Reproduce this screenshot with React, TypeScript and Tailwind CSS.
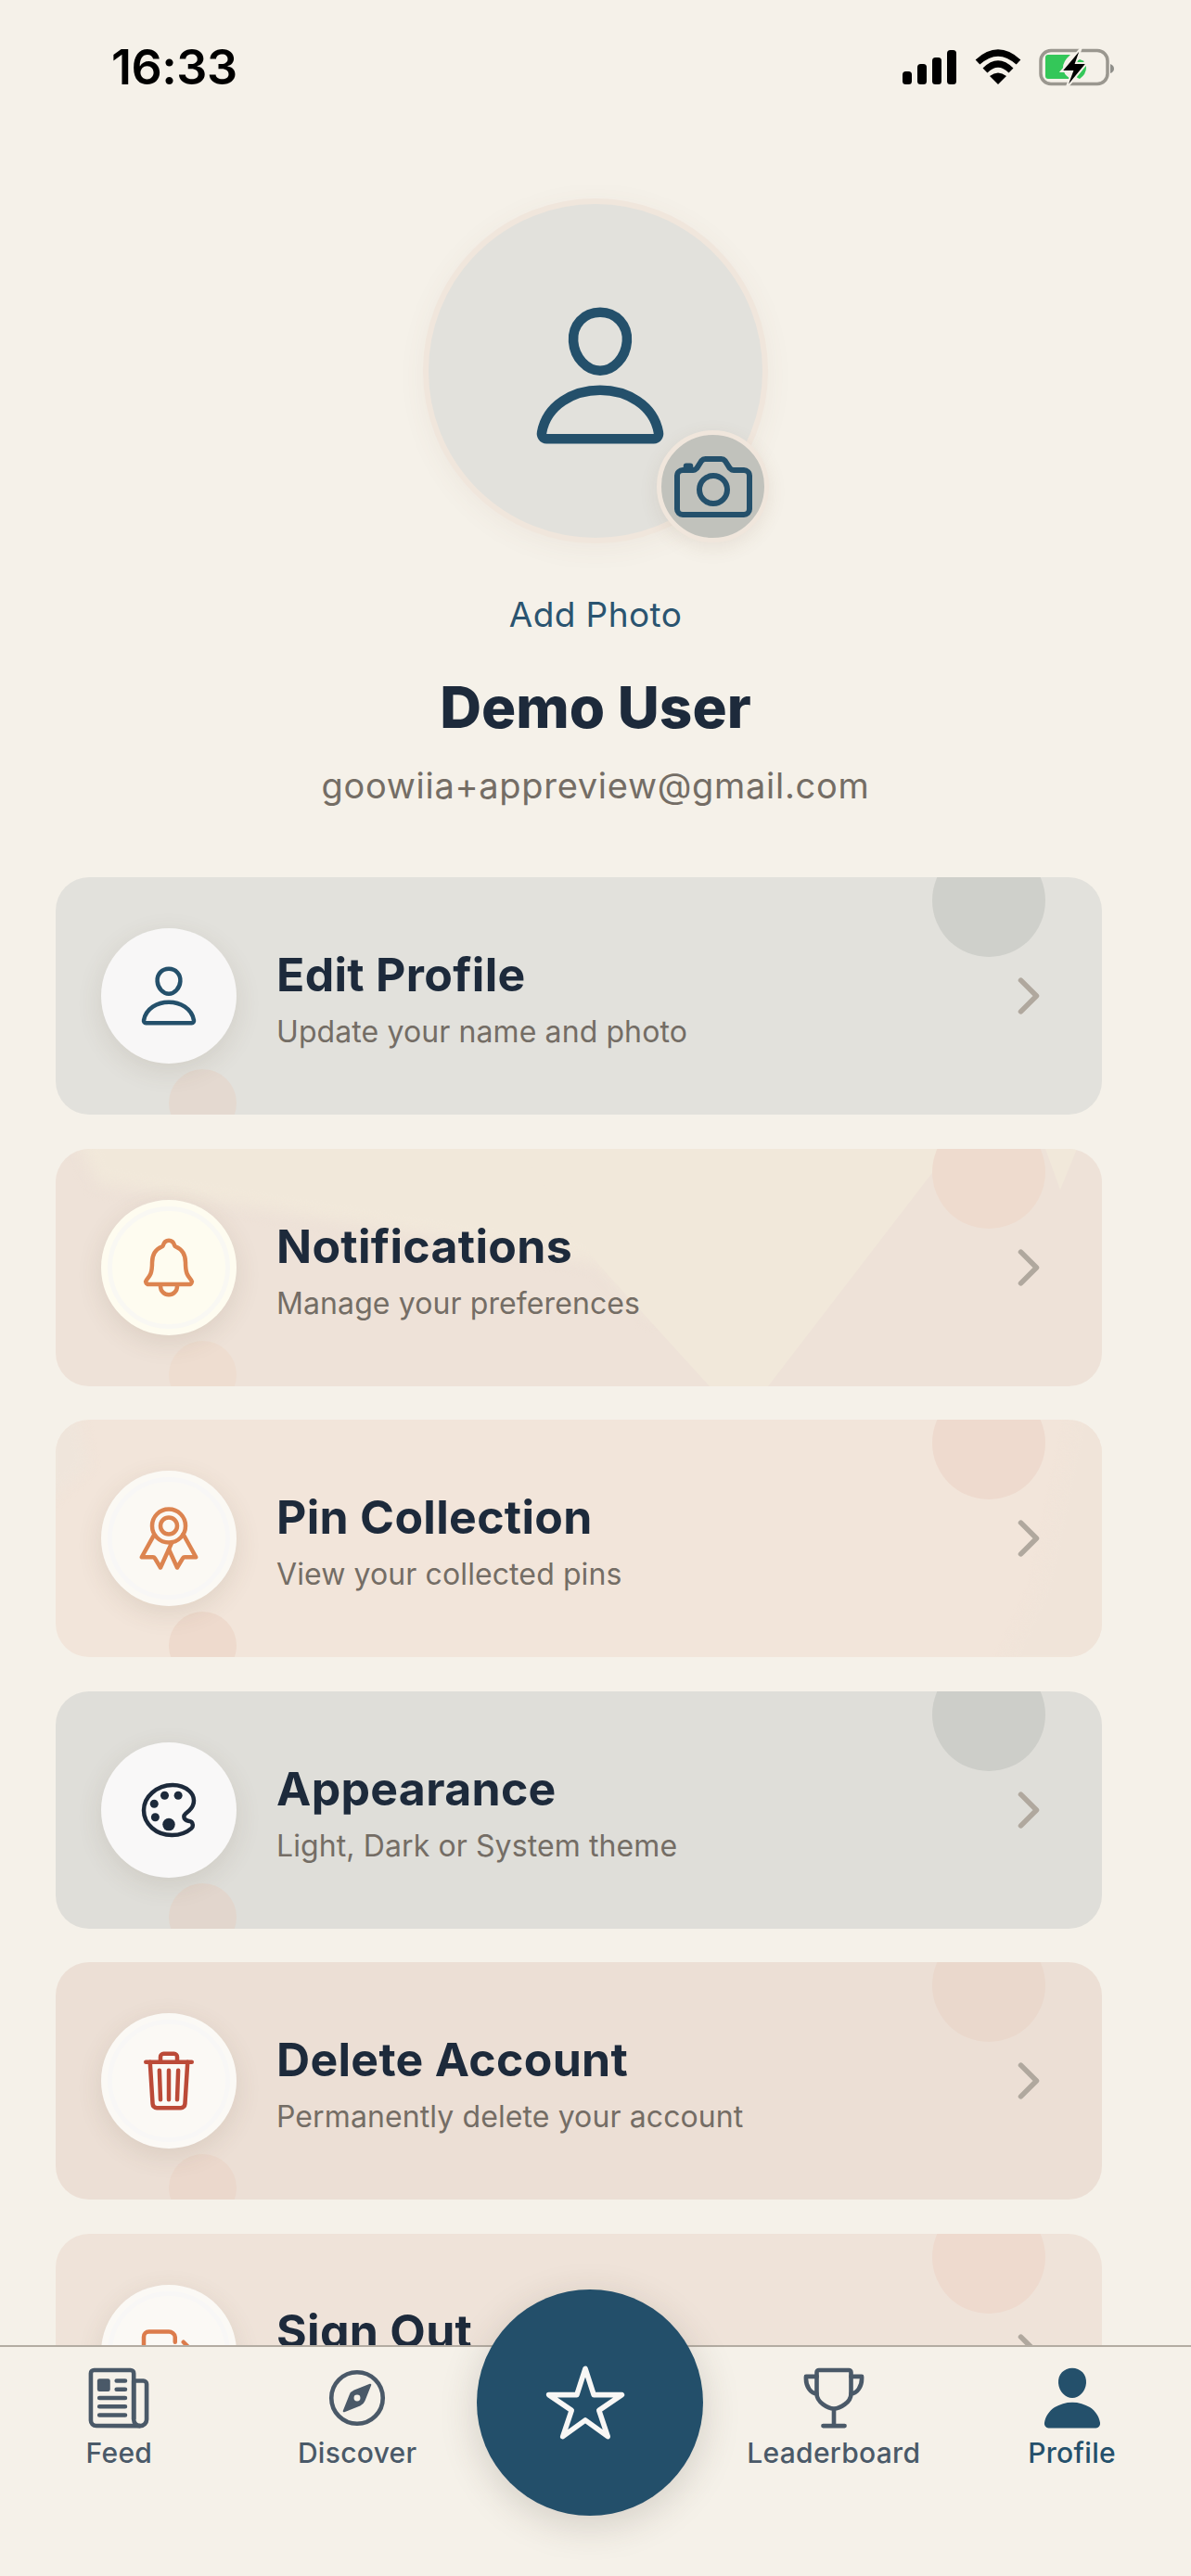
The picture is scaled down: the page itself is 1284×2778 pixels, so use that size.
import {
  IoCameraOutline,
  IoChevronForward,
  IoColorPaletteOutline,
  IoCompassOutline,
  IoLogOutOutline,
  IoNewspaperOutline,
  IoNotificationsOutline,
  IoPerson,
  IoPersonOutline,
  IoRibbonOutline,
  IoStarOutline,
  IoTrashOutline,
  IoTrophyOutline,
} from "react-icons/io5";
import type { IconType } from "react-icons";

type Row = {
  title: string;
  sub: string;
  Icon: IconType;
  iconColor: string;
  card: string;
  corner: string;
  foot: string;
  disc: string;
  ring?: string;
  shape?: "vee" | "band";
};

const rows: Row[] = [
  {
    title: "Edit Profile",
    sub: "Update your name and photo",
    Icon: IoPersonOutline,
    iconColor: "text-[#24506b]",
    card: "bg-[#e2e1dc]",
    corner: "bg-[#cfd0cb]",
    foot: "bg-[#e4d9d0]",
    disc: "bg-[#f8f7f7]",
  },
  {
    title: "Notifications",
    sub: "Manage your preferences",
    Icon: IoNotificationsOutline,
    iconColor: "text-[#dc8450]",
    card: "bg-[#eee2d8]",
    corner: "bg-[#eedbce]",
    foot: "bg-[#eeddd0]",
    disc: "bg-[#fefcf0]",
    ring: "border-[#f9f8f3]",
    shape: "vee",
  },
  {
    title: "Pin Collection",
    sub: "View your collected pins",
    Icon: IoRibbonOutline,
    iconColor: "text-[#dc8450]",
    card: "bg-[#f2e5da]",
    corner: "bg-[#eedace]",
    foot: "bg-[#eedacd]",
    disc: "bg-[#fbf9f4]",
    ring: "border-[#f8f7f6]",
    shape: "band",
  },
  {
    title: "Appearance",
    sub: "Light, Dark or System theme",
    Icon: IoColorPaletteOutline,
    iconColor: "text-[#1d2a3b]",
    card: "bg-[#dfded9]",
    corner: "bg-[#cdcec9]",
    foot: "bg-[#e2d6cd]",
    disc: "bg-[#f9f8f8]",
  },
  {
    title: "Delete Account",
    sub: "Permanently delete your account",
    Icon: IoTrashOutline,
    iconColor: "text-[#bb4a38]",
    card: "bg-[#ecdfd5]",
    corner: "bg-[#ead8cc]",
    foot: "bg-[#ebd8cc]",
    disc: "bg-[#fbf9f5]",
    ring: "border-[#f8f7f6]",
  },
  {
    title: "Sign Out",
    sub: "Sign out of your account",
    Icon: IoLogOutOutline,
    iconColor: "text-[#dc7c4c]",
    card: "bg-[#efe3d9]",
    corner: "bg-[#eedace]",
    foot: "bg-[#eedacd]",
    disc: "bg-[#fbf9f5]",
    ring: "border-[#f8f7f6]",
  },
];

const tabs: { label: string; Icon: IconType; active?: boolean }[] = [
  { label: "Feed", Icon: IoNewspaperOutline },
  { label: "Discover", Icon: IoCompassOutline },
  { label: "", Icon: IoStarOutline },
  { label: "Leaderboard", Icon: IoTrophyOutline },
  { label: "Profile", Icon: IoPerson, active: true },
];

// drawn by hand, none of the icon sets has the ios status glyphs
const StatusIcons = () => (
  <svg width="232" height="44" viewBox="0 0 232 44" fill="none">
    <rect x="1" y="25" width="10" height="14" rx="3.5" fill="#000" />
    <rect x="17" y="17" width="10" height="22" rx="3.5" fill="#000" />
    <rect x="33" y="10" width="10" height="29" rx="3.5" fill="#000" />
    <rect x="49" y="2" width="10" height="37" rx="3.5" fill="#000" />
    <path d="M82 15Q104-5 126 15" stroke="#000" strokeWidth="7" />
    <path d="M90 24Q104 10 118 24" stroke="#000" strokeWidth="7" />
    <path d="M104 39L95 30Q104 23 113 30Z" fill="#000" />
    <rect x="150" y="2.5" width="72" height="36" rx="11" stroke="#9a978f" strokeWidth="3.5" />
    <path d="M225 17v10q4-1.5 4-5t-4-5Z" fill="#8f8f8a" />
    <path d="M158 7h24q-8 7-8 14t8 12h-24q-3 0-3-3V10q0-3 3-3Z" fill="#34c759" />
    <path d="M192 12q7 2 7 9t-7 12q-6-2-6-10t6-11Z" fill="#34c759" />
    <path d="M194 -1 172 25h12l-7 19 23-28h-12l6-17Z" fill="#000" stroke="#f5f1e9" strokeWidth="2" />
  </svg>
);

const CardShape = ({ shape }: { shape: "vee" | "band" }) => (
  <svg className="absolute inset-0" width="1128" height="256" viewBox="0 0 1128 256">
    {shape === "vee" ? (
      <>
        <path className="blur-[8px]" d="M18-20L45 37 188 59 584 123 640 180 800 180 900-20Z" fill="#f1e8da" />
        <path d="M584 123L705 256H768L944 27 968 0H500Z" fill="#f1e8da" />
        <path d="M1067 0L1083 44 1101 0Z" fill="#f1e8da" />
      </>
    ) : (
      <>
        <path className="blur-[6px]" d="M1100-10L1140-10V266H1020L1060 180Z" fill="#f0e4d9" />
        <path className="blur-[6px]" d="M-10-10H22L36 50-10 90Z" fill="#efe5db" />
      </>
    )}
  </svg>
);

const ProfileRow = ({ row }: { row: Row }) => {
  const { Icon } = row;
  return (
    <div
      className={`relative flex items-center h-[256px] shrink-0 rounded-[36px] overflow-hidden px-[49px] ${row.card}`}
    >
      {row.shape && <CardShape shape={row.shape} />}
      <div className={`absolute -top-[36px] right-[61px] w-[122px] h-[122px] rounded-full ${row.corner}`} />
      <div className={`absolute -bottom-[24px] left-[122px] w-[73px] h-[73px] rounded-full ${row.foot}`} />
      <div
        className={`relative flex items-center justify-center shrink-0 w-[146px] h-[146px] rounded-full shadow-[0_8px_28px_rgba(90,70,50,0.12)] ${row.disc}`}
      >
        {row.ring && <div className={`absolute inset-[7px] rounded-full border-[5px] ${row.ring}`} />}
        <Icon size={72} className={`relative ${row.iconColor}`} />
      </div>
      <div className="relative flex-1 ml-[43px] pt-[6px]">
        <div className="text-[50px] leading-[60px] [font-weight:650] text-[#1d2a3b] tracking-[0.3px]">{row.title}</div>
        <div className="text-[32px] leading-[40px] mt-[12px] text-[#746d65] tracking-[0.1px]">{row.sub}</div>
      </div>
      <IoChevronForward size={60} className="relative shrink-0 text-[#b0a89e]" />
    </div>
  );
};

const App = () => {
  return (
    <div className="flex flex-col w-[1284px] h-[2778px] overflow-hidden bg-[#f5f1e9] [font-family:Inter,sans-serif]">
      <div className="flex-1 min-h-0 overflow-hidden">
        <div className="flex justify-between items-start h-[120px] pt-[52px] pl-[120px] pr-[80px]">
          <div className="text-[52px] leading-[42px] font-semibold text-black tracking-[-0.5px]">16:33</div>
          <StatusIcons />
        </div>

        <div className="flex flex-col items-center mt-[94px]">
          <div className="relative w-[372px] h-[372px]">
            <div className="flex items-center justify-center w-full h-full pl-[10px] pt-[10px] rounded-full bg-[#e2e1dc] border-[6px] border-[#f0e6dc] shadow-[0_6px_30px_rgba(120,90,60,0.06)]">
              <IoPersonOutline size={168} className="text-[#24506b]" />
            </div>
            <div className="absolute -right-[1px] bottom-[1px] flex items-center justify-center w-[121px] h-[121px] rounded-full bg-[#c1c2bc] border-[5px] border-[#f0e6dc] shadow-[0_6px_20px_rgba(120,90,60,0.1)]">
              <IoCameraOutline size={96} className="text-[#24506b]" />
            </div>
          </div>
          <div className="mt-[55px] text-[37px] leading-[44px] text-[#2a5470] tracking-[0.4px]">Add Photo</div>
          <div className="mt-[42px] text-[62px] leading-[72px] font-extrabold text-[#1d2a3b]">Demo User</div>
          <div className="mt-[24px] text-[38px] leading-[48px] text-[#746d65] tracking-[0.7px]">goowiia+appreview@gmail.com</div>
        </div>

        <div className="flex flex-col gap-[36.5px] w-[1128px] ml-[60px] mt-[75px]">
          {rows.map((row) => (
            <ProfileRow key={row.title} row={row} />
          ))}
        </div>
      </div>

      <div className="relative grid grid-cols-5 h-[249px] shrink-0 bg-[#f5f1e9] border-t-2 border-[#b3aca2] pt-[18px]">
        {tabs.map(({ label, Icon, active }) =>
          label ? (
            <div
              key={label}
              className={`flex flex-col items-center ${active ? "text-[#24506b]" : "text-[#4a5968]"}`}
            >
              <Icon size={74} />
              <div className="mt-[2px] text-[30px] leading-[40px] font-medium tracking-[0.3px]">{label}</div>
            </div>
          ) : (
            <div key="fab" />
          ),
        )}
        <div className="absolute left-[514px] -top-[62px] flex items-center justify-center w-[244px] h-[244px] pr-[10px] rounded-full bg-[#234f6a] shadow-[0_10px_40px_rgba(60,50,40,0.18)]">
          <IoStarOutline size={90} className="text-[#f8f7f5]" />
        </div>
      </div>
    </div>
  );
};

export default App;
